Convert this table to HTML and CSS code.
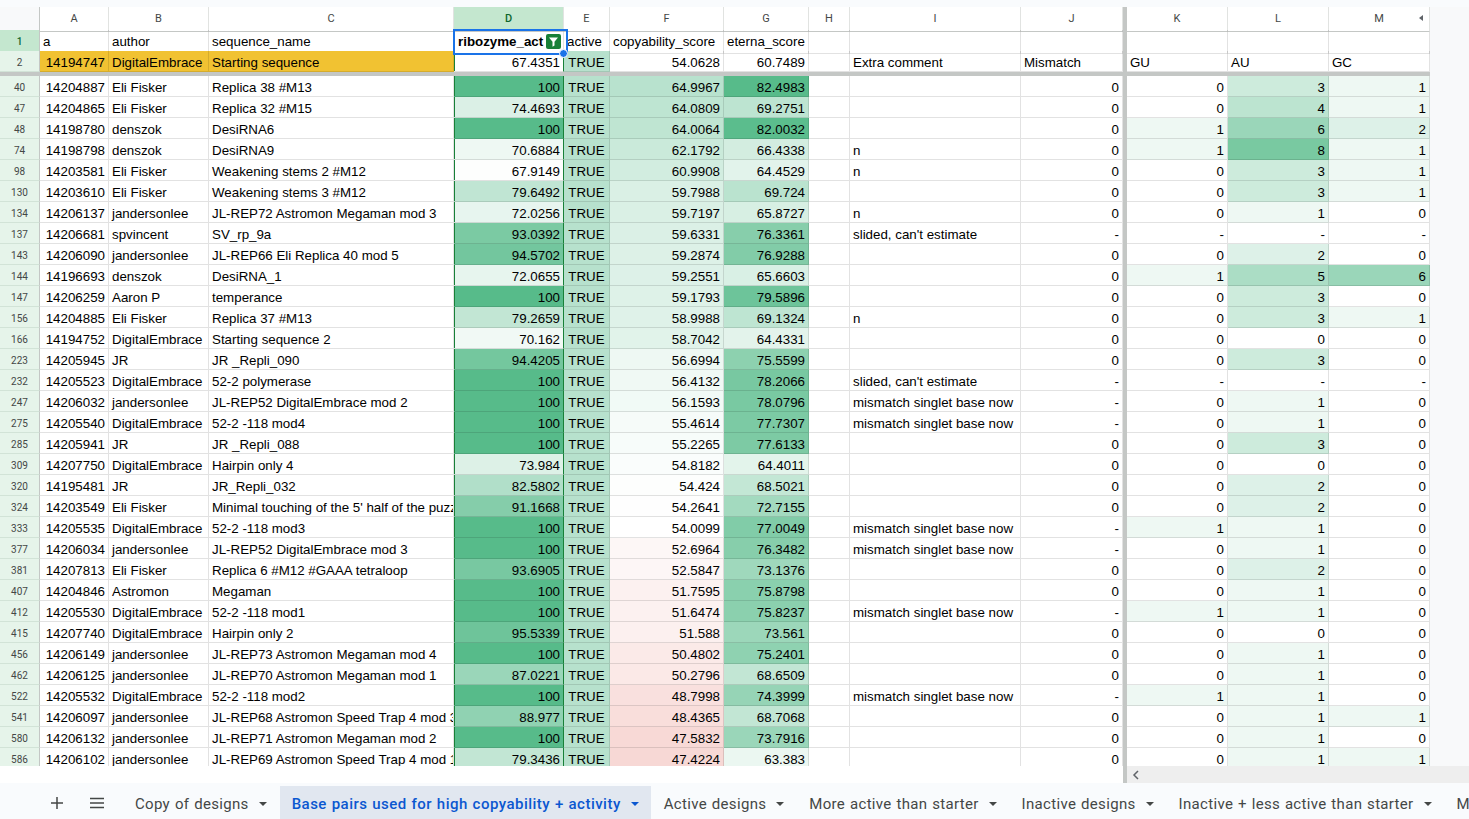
FILE: index.html
```html
<!DOCTYPE html>
<html lang="en">
<head>
<meta charset="utf-8">
<title>Sheet</title>
<link rel="stylesheet" href="styles.css">
</head>
<body>
<div class="app">
  <div class="topstrip"></div>
  <div class="main">
    <div class="sheet">
      <div class="row colhdr">
        <div class="corner"></div>
        <div class="ch">A</div>
        <div class="ch">B</div>
        <div class="ch">C</div>
        <div class="ch ch-sel">D</div>
        <div class="ch">E</div>
        <div class="ch">F</div>
        <div class="ch">G</div>
        <div class="ch">H</div>
        <div class="ch">I</div>
        <div class="ch">J</div>
        <div class="sep"></div>
        <div class="ch">K</div>
        <div class="ch">L</div>
        <div class="ch ch-last">M<span class="scroll-hint"></span></div>
      </div>
      <div class="row">
        <div class="rh rh-sel">1</div>
        <div class="c">a</div>
        <div class="c">author</div>
        <div class="c">sequence_name</div>
        <div class="c d1">ribozyme_act<span class="filter-btn"><svg width="15" height="15" viewBox="0 0 15 15"><rect width="15" height="15" rx="2" fill="#188038"/><path d="M3 3.5h9l-3.5 4.2v3.8l-2 1.2v-5z" fill="#fff"/></svg></span><span class="sel-dot"></span></div>
        <div class="c">active</div>
        <div class="c">copyability_score</div>
        <div class="c">eterna_score</div>
        <div class="c"></div>
        <div class="c"></div>
        <div class="c"></div>
        <div class="sep"></div>
        <div class="c"></div>
        <div class="c"></div>
        <div class="c"></div>
      </div>
      <div class="row">
        <div class="rh">2</div>
        <div class="c n start">14194747</div>
        <div class="c start">DigitalEmbrace</div>
        <div class="c start">Starting sequence</div>
        <div class="c n dcol">67.4351</div>
        <div class="c b tr">TRUE</div>
        <div class="c n">54.0628</div>
        <div class="c n">60.7489</div>
        <div class="c"></div>
        <div class="c">Extra comment</div>
        <div class="c">Mismatch</div>
        <div class="sep"></div>
        <div class="c">GU</div>
        <div class="c">AU</div>
        <div class="c">GC</div>
      </div>
      <div class="hdiv"></div>
      <div id="rows"></div>
    </div>
    <div class="filler"></div>
  </div>
  <div class="hscroll">
    <div class="hs-left"></div>
    <div class="hs-sep"></div>
    <div class="hs-track"><svg width="8" height="10" viewBox="0 0 8 10"><path d="M6 1L2 5l4 4" fill="none" stroke="#5f6368" stroke-width="1.5"/></svg></div>
  </div>
  <div class="tabbar">
    <div class="tb-btn"><svg width="14" height="14" viewBox="0 0 14 14"><path d="M7 1v12M1 7h12" stroke="#444746" stroke-width="1.5"/></svg></div>
    <div class="tb-btn"><svg width="16" height="12" viewBox="0 0 16 12"><path d="M1 1.5h14M1 6h14M1 10.5h14" stroke="#444746" stroke-width="1.5"/></svg></div>
    <div class="tab first">Copy of designs<svg class="arr" width="8" height="4" viewBox="0 0 8 4"><path d="M0 0h8L4 4z"/></svg></div>
    <div class="tab active">Base pairs used for high copyability + activity<svg class="arr" width="8" height="4" viewBox="0 0 8 4"><path d="M0 0h8L4 4z"/></svg></div>
    <div class="tab">Active designs<svg class="arr" width="8" height="4" viewBox="0 0 8 4"><path d="M0 0h8L4 4z"/></svg></div>
    <div class="tab">More active than starter<svg class="arr" width="8" height="4" viewBox="0 0 8 4"><path d="M0 0h8L4 4z"/></svg></div>
    <div class="tab">Inactive designs<svg class="arr" width="8" height="4" viewBox="0 0 8 4"><path d="M0 0h8L4 4z"/></svg></div>
    <div class="tab">Inactive + less active than starter<svg class="arr" width="8" height="4" viewBox="0 0 8 4"><path d="M0 0h8L4 4z"/></svg></div>
    <div class="tab">More</div>
  </div>
</div>
<script src="script.js"></script>
</body>
</html>
```

FILE: styles.css
```css
* { box-sizing: border-box; }
html, body {
  margin: 0;
  padding: 0;
  width: 1469px;
  height: 819px;
  overflow: hidden;
  background: #f9fbfd;
}
body { font-family: "Liberation Sans", Arial, sans-serif; }

.app { display: flex; flex-direction: column; height: 819px; }
.topstrip { height: 7px; flex: none; background: #f9fbfd; }

.main { display: flex; height: 759px; flex: none; overflow: hidden; }
.sheet { width: 1430px; flex: none; overflow: hidden; background: #fff; }
.filler { flex: 1; background: #f8f9fa; }

.row {
  display: grid;
  grid-template-columns: 40px 69px 100px 245px 110px 46px 114px 85px 41px 171px 102px 4px 101px 101px 101px;
  height: 21px;
}
.colhdr { height: 23px; }

.corner {
  background: #f8f9fa;
  border-right: 1px solid #c4c7c5;
  border-bottom: 1px solid #c4c7c5;
}
.ch {
  font-family: Roboto, "Liberation Sans", sans-serif;
  font-size: 11px;
  color: #444746;
  text-align: center;
  line-height: 24px;
  background: #fff;
  border-right: 1px solid #e1e3e1;
  border-bottom: 1px solid #c4c7c5;
}
.ch-sel { background: #c4e7cf; color: #0d652d; font-weight: 500; }
.ch-last { position: relative; }
.scroll-hint {
  position: absolute;
  right: 6px;
  top: 8px;
  width: 0;
  height: 0;
  border-top: 3.5px solid transparent;
  border-bottom: 3.5px solid transparent;
  border-right: 4px solid #5f6368;
}

.sep { background: #c4c7c5; }
.hdiv { height: 4px; background: #c4c7c5; }

.rh {
  font-family: Roboto, "Liberation Sans", sans-serif;
  font-size: 10px;
  color: #444746;
  text-align: center;
  line-height: 23px;
  overflow: hidden;
  background: #e6f4ea;
  border-right: 1px solid #c4c7c5;
  border-bottom: 1px solid #d2e3d7;
}
.rh-sel { background: #c4e7cf; color: #0d652d; font-weight: 500; }

.c {
  font-size: 13.33px;
  line-height: 23px;
  color: #000;
  padding: 0 3px;
  white-space: nowrap;
  overflow: hidden;
  border-right: 1px solid rgba(0, 0, 0, 0.115);
  border-bottom: 1px solid rgba(0, 0, 0, 0.115);
}
.n { text-align: right; }
.b { text-align: center; }
.tr { background: #b7e1cd; }
.start { background: #f1c232; }
.dcol { box-shadow: inset 1px 0 0 #188038; border-right-color: #188038; }

.d1 {
  position: relative;
  z-index: 5;
  overflow: visible;
  font-weight: bold;
  padding-left: 4px;
}
.d1::after {
  content: "";
  position: absolute;
  left: -1px;
  top: -1px;
  width: 111px;
  height: 22px;
  border: 2px solid #1a73e8;
  pointer-events: none;
}
.filter-btn {
  position: absolute;
  right: 2px;
  top: 4px;
  width: 15px;
  height: 15px;
  display: block;
}
.filter-btn svg { display: block; }
.sel-dot {
  position: absolute;
  right: -5px;
  bottom: -5px;
  width: 9px;
  height: 9px;
  border-radius: 50%;
  background: #1a73e8;
  border: 1px solid #fff;
  z-index: 6;
}

.hscroll { height: 17px; flex: none; display: flex; }
.hs-left { width: 1123px; background: #fff; }
.hs-sep { width: 4px; background: #c4c7c5; }
.hs-track {
  flex: 1;
  background: #eeeeee;
  display: flex;
  align-items: center;
  padding-left: 5px;
}
.hs-track svg { display: block; }

.tabbar {
  height: 36px;
  flex: none;
  display: flex;
  align-items: flex-start;
  padding-top: 3px;
  padding-left: 40px;
  background: #f9fbfd;
  overflow: hidden;
  font-family: Roboto, "Open Sans", sans-serif;
}
.tb-btn {
  width: 34px;
  height: 33px;
  flex: none;
  display: flex;
  align-items: center;
  justify-content: center;
}
.tb-btn + .tb-btn { margin-left: 6px; }
.tb-btn svg { display: block; }
.tab {
  height: 36px;
  flex: none;
  display: flex;
  align-items: center;
  gap: 10px;
  padding: 0 12px;
  margin-right: 1px;
  font-size: 15px;
  letter-spacing: 0.32px;
  word-spacing: 0.8px;
  color: #444746;
  white-space: nowrap;
}
.tab.first { margin-left: 9px; }
.tab .arr { display: block; fill: currentColor; flex: none; }
.tab.active {
  background: #e1e7f0;
  color: #0b57d0;
  font-weight: 500;
  letter-spacing: 0.48px;
  word-spacing: 0.6px;
}
```

FILE: script.js
```javascript
(function () {
  var DATA = [
    [40, '14204887', 'Eli Fisker', 'Replica 38 #M13', '100', '64.9967', '82.4983', '', '0', '0', '3', '1'],
    [47, '14204865', 'Eli Fisker', 'Replica 32 #M15', '74.4693', '64.0809', '69.2751', '', '0', '0', '4', '1'],
    [48, '14198780', 'denszok', 'DesiRNA6', '100', '64.0064', '82.0032', '', '0', '1', '6', '2'],
    [74, '14198798', 'denszok', 'DesiRNA9', '70.6884', '62.1792', '66.4338', 'n', '0', '1', '8', '1'],
    [98, '14203581', 'Eli Fisker', 'Weakening stems 2 #M12', '67.9149', '60.9908', '64.4529', 'n', '0', '0', '3', '1'],
    [130, '14203610', 'Eli Fisker', 'Weakening stems 3 #M12', '79.6492', '59.7988', '69.724', '', '0', '0', '3', '1'],
    [134, '14206137', 'jandersonlee', 'JL-REP72 Astromon Megaman mod 3', '72.0256', '59.7197', '65.8727', 'n', '0', '0', '1', '0'],
    [137, '14206681', 'spvincent', 'SV_rp_9a', '93.0392', '59.6331', '76.3361', "slided, can't estimate", '-', '-', '-', '-'],
    [143, '14206090', 'jandersonlee', 'JL-REP66 Eli Replica 40 mod 5', '94.5702', '59.2874', '76.9288', '', '0', '0', '2', '0'],
    [144, '14196693', 'denszok', 'DesiRNA_1', '72.0655', '59.2551', '65.6603', '', '0', '1', '5', '6'],
    [147, '14206259', 'Aaron P', 'temperance', '100', '59.1793', '79.5896', '', '0', '0', '3', '0'],
    [156, '14204885', 'Eli Fisker', 'Replica 37 #M13', '79.2659', '58.9988', '69.1324', 'n', '0', '0', '3', '1'],
    [166, '14194752', 'DigitalEmbrace', 'Starting sequence 2', '70.162', '58.7042', '64.4331', '', '0', '0', '0', '0'],
    [223, '14205945', 'JR', 'JR _Repli_090', '94.4205', '56.6994', '75.5599', '', '0', '0', '3', '0'],
    [232, '14205523', 'DigitalEmbrace', '52-2 polymerase', '100', '56.4132', '78.2066', "slided, can't estimate", '-', '-', '-', '-'],
    [247, '14206032', 'jandersonlee', 'JL-REP52 DigitalEmbrace mod 2', '100', '56.1593', '78.0796', 'mismatch singlet base now', '-', '0', '1', '0'],
    [275, '14205540', 'DigitalEmbrace', '52-2 -118 mod4', '100', '55.4614', '77.7307', 'mismatch singlet base now', '-', '0', '1', '0'],
    [285, '14205941', 'JR', 'JR _Repli_088', '100', '55.2265', '77.6133', '', '0', '0', '3', '0'],
    [309, '14207750', 'DigitalEmbrace', 'Hairpin only 4', '73.984', '54.8182', '64.4011', '', '0', '0', '0', '0'],
    [320, '14195481', 'JR', 'JR_Repli_032', '82.5802', '54.424', '68.5021', '', '0', '0', '2', '0'],
    [324, '14203549', 'Eli Fisker', "Minimal touching of the 5' half of the puzzle", '91.1668', '54.2641', '72.7155', '', '0', '0', '2', '0'],
    [333, '14205535', 'DigitalEmbrace', '52-2 -118 mod3', '100', '54.0099', '77.0049', 'mismatch singlet base now', '-', '1', '1', '0'],
    [377, '14206034', 'jandersonlee', 'JL-REP52 DigitalEmbrace mod 3', '100', '52.6964', '76.3482', 'mismatch singlet base now', '-', '0', '1', '0'],
    [381, '14207813', 'Eli Fisker', 'Replica 6 #M12 #GAAA tetraloop', '93.6905', '52.5847', '73.1376', '', '0', '0', '2', '0'],
    [407, '14204846', 'Astromon', 'Megaman', '100', '51.7595', '75.8798', '', '0', '0', '1', '0'],
    [412, '14205530', 'DigitalEmbrace', '52-2 -118 mod1', '100', '51.6474', '75.8237', 'mismatch singlet base now', '-', '1', '1', '0'],
    [415, '14207740', 'DigitalEmbrace', 'Hairpin only 2', '95.5339', '51.588', '73.561', '', '0', '0', '0', '0'],
    [456, '14206149', 'jandersonlee', 'JL-REP73 Astromon Megaman mod 4', '100', '50.4802', '75.2401', '', '0', '0', '1', '0'],
    [462, '14206125', 'jandersonlee', 'JL-REP70 Astromon Megaman mod 1', '87.0221', '50.2796', '68.6509', '', '0', '0', '1', '0'],
    [522, '14205532', 'DigitalEmbrace', '52-2 -118 mod2', '100', '48.7998', '74.3999', 'mismatch singlet base now', '-', '1', '1', '0'],
    [541, '14206097', 'jandersonlee', 'JL-REP68 Astromon Speed Trap 4 mod 3', '88.977', '48.4365', '68.7068', '', '0', '0', '1', '1'],
    [580, '14206132', 'jandersonlee', 'JL-REP71 Astromon Megaman mod 2', '100', '47.5832', '73.7916', '', '0', '0', '1', '0'],
    [586, '14206102', 'jandersonlee', 'JL-REP69 Astromon Speed Trap 4 mod 1', '79.3436', '47.4224', '63.383', '', '0', '0', '1', '1']
  ];

  var GREEN = [87, 187, 138];
  var RED = [230, 124, 115];

  function mix(c, t) {
    t = Math.max(0, Math.min(1, t));
    var r = Math.round(255 + (c[0] - 255) * t);
    var g = Math.round(255 + (c[1] - 255) * t);
    var b = Math.round(255 + (c[2] - 255) * t);
    return 'rgb(' + r + ',' + g + ',' + b + ')';
  }
  function lin(v, min, max) { return mix(GREEN, (v - min) / (max - min)); }
  function fcol(v) {
    var mid = 54.0628;
    return v >= mid ? mix(GREEN, (v - mid) / (80 - mid)) : mix(RED, (mid - v) / (mid - 32));
  }
  function cnt(v) { return v === '-' ? '' : mix(GREEN, parseFloat(v) / 10); }

  function cell(cls, text, bg) {
    var d = document.createElement('div');
    d.className = cls;
    if (text) d.textContent = text;
    if (bg) d.style.background = bg;
    return d;
  }

  var host = document.getElementById('rows');
  DATA.forEach(function (r) {
    var row = document.createElement('div');
    row.className = 'row';
    row.appendChild(cell('rh', String(r[0])));
    row.appendChild(cell('c n', r[1]));
    row.appendChild(cell('c', r[2]));
    row.appendChild(cell('c', r[3]));
    row.appendChild(cell('c n dcol', r[4], lin(parseFloat(r[4]), 67.4351, 100)));
    row.appendChild(cell('c b tr', 'TRUE'));
    row.appendChild(cell('c n', r[5], fcol(parseFloat(r[5]))));
    row.appendChild(cell('c n', r[6], lin(parseFloat(r[6]), 60.7489, 82.4983)));
    row.appendChild(cell('c', ''));
    row.appendChild(cell('c', r[7]));
    row.appendChild(cell('c n', r[8]));
    row.appendChild(cell('sep', ''));
    row.appendChild(cell('c n', r[9], cnt(r[9])));
    row.appendChild(cell('c n', r[10], cnt(r[10])));
    row.appendChild(cell('c n', r[11], cnt(r[11])));
    host.appendChild(row);
  });
})();
```
